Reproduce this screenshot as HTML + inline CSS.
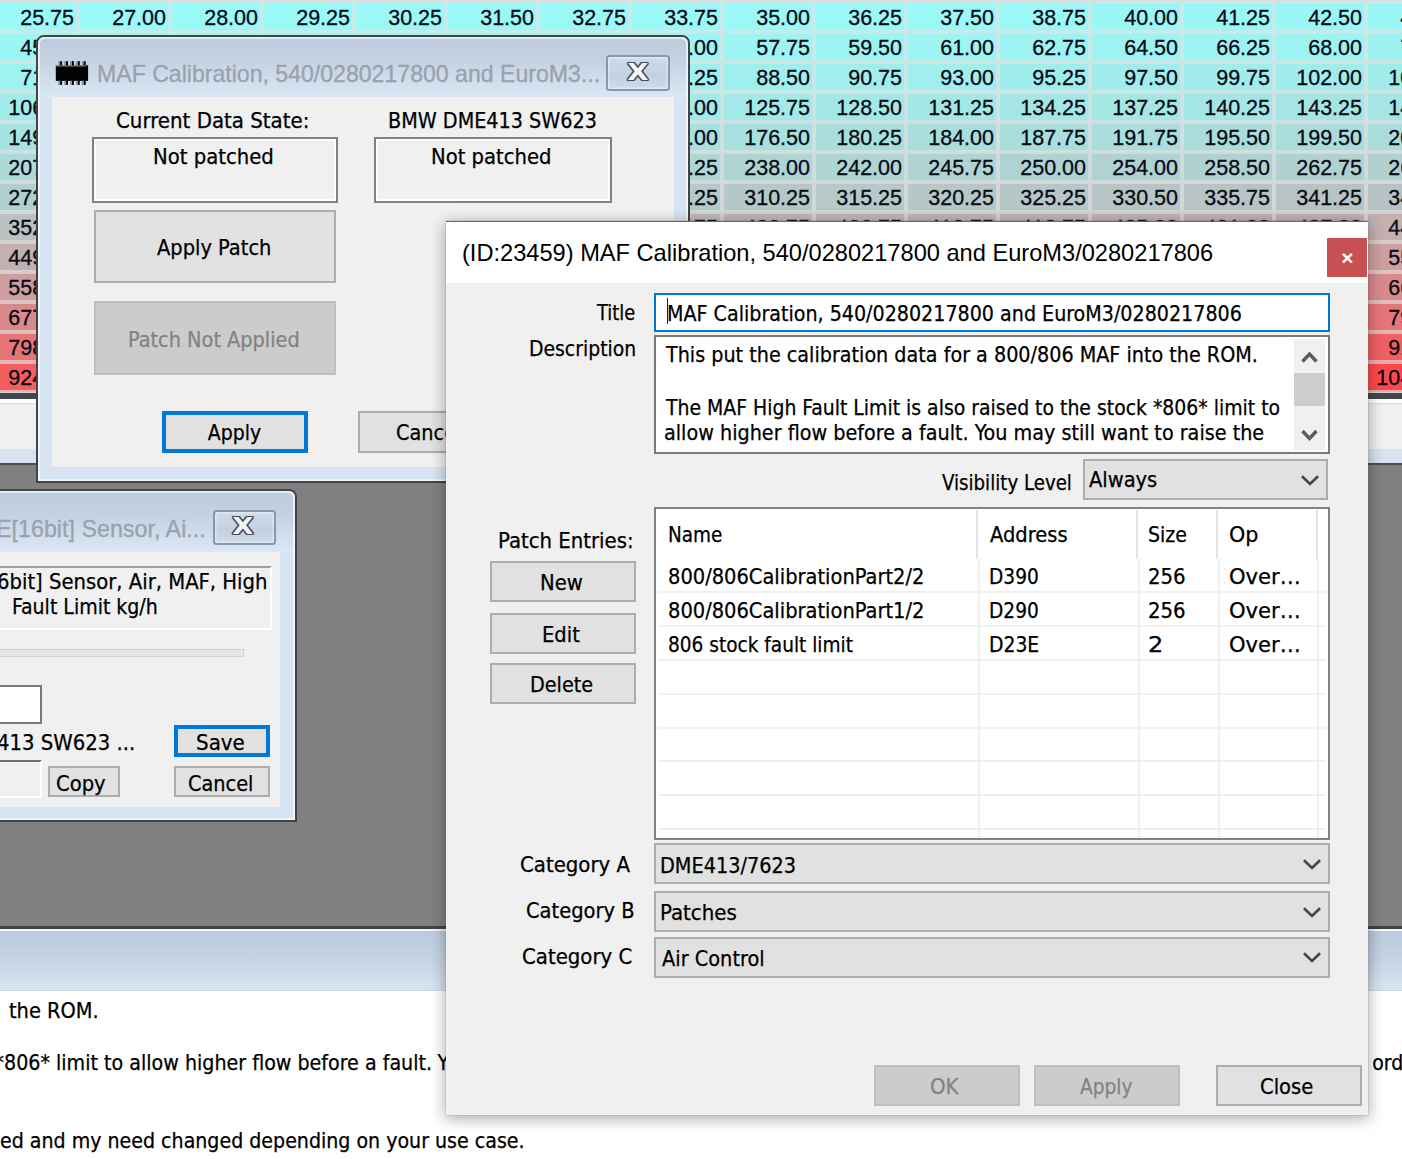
<!DOCTYPE html>
<html lang="en">
<head>
<meta charset="utf-8">
<title>(ID:23459) MAF Calibration, 540/0280217800 and EuroM3/0280217806</title>
<style>
html,body{margin:0;padding:0}
body{width:1402px;height:1159px;overflow:hidden;position:relative;background:#808080;
 font-family:"DejaVu Sans Condensed","Liberation Sans",sans-serif;font-size:21px;color:#000}
div,.gr span,span.t{position:absolute;box-sizing:border-box;display:block}
.t{white-space:pre;transform-origin:0 0;line-height:normal;-webkit-text-stroke:0.25px currentColor}
.page{left:0;top:0;width:1402px;height:1159px}
/* grid */
.grid{left:0;top:0;width:1402px;height:393px;background:#dadddd;overflow:hidden}
.gr{left:0;width:1402px;height:26.4px}
.gr span{top:0;width:88px;height:26.4px;font:normal 21.5px/26px "Liberation Sans",sans-serif;text-align:right;padding-right:2px;padding-top:.6px;color:#0a0a14;white-space:nowrap;background:var(--c);box-shadow:0 0 .8px 2.2px var(--g);-webkit-text-stroke:0.3px #0a0a14}
/* classic controls */
.btn{background:#e1e1e1;border:2px solid #adadad}
.btn.dis{background:#cccccc;border-color:#bfbfbf}
.btn.def{border:4px solid #0078d7}
.sunk{border:2px solid #828282;box-shadow:inset 2px 2px 0 #fff,inset -2px -2px 0 #fff;background:#f0f0f0}
.combo{background:#e1e1e1;border:2px solid #adadad}
.edit{background:#fff;border:2px solid #7a7a7a}
/* aero-basic inactive frame */
.frame{border:2px solid #404348;border-radius:8px 8px 0 0;overflow:hidden;background:#d7e4f2}
.frame::after{content:"";position:absolute;left:0;top:0;right:0;bottom:0;box-shadow:inset 0 0 0 1.8px rgba(255,255,255,.72);border-radius:7px 7px 0 0;pointer-events:none}
.cap{left:0;top:0;width:100%;height:62px;background:linear-gradient(#bccbdd,#c4d2e3 40%,#dbe7f5)}
.xbtn{border:2px solid #8797ae;border-radius:3.5px;background:linear-gradient(#cfdae8,#c6d3e3 50%,#c1cfe0 51%,#cfdbe9);box-shadow:inset 0 0 0 1.5px rgba(255,255,255,.38)}
.rx{position:absolute;left:0;top:0;width:40.6px;height:40px;text-align:center;font:bold 21px/40px "Liberation Sans",sans-serif;color:#fff}
.xg{position:absolute;left:0;width:59.7px;text-align:center;font:bold 22.5px/29px "DejaVu Sans","Liberation Sans",sans-serif;color:#f3f4f6;transform:scaleX(1.22);text-shadow:-1px -1px 0 #454b56,1px -1px 0 #454b56,-1px 1px 0 #454b56,1px 1px 0 #454b56,0 -1.2px 0 #454b56,0 1.2px 0 #454b56,-1.2px 0 0 #454b56,1.2px 0 0 #454b56}
</style>
</head>
<body>

<!-- ============ main application background ============ -->
<div class="page" id="app">
  <div class="grid">
<div class="gr" style="top:4.10px">
<span style="left:-12px;--c:#99faf8;--g:#c8ebea">25.75</span>
<span style="left:80px;--c:#99faf8;--g:#c8ebea">27.00</span>
<span style="left:172px;--c:#99f9f7;--g:#c8ebea">28.00</span>
<span style="left:264px;--c:#99f9f7;--g:#c8ebea">29.25</span>
<span style="left:356px;--c:#9af9f7;--g:#c8ebea">30.25</span>
<span style="left:448px;--c:#9af9f7;--g:#c8ebea">31.50</span>
<span style="left:540px;--c:#9af9f7;--g:#c8ebea">32.75</span>
<span style="left:632px;--c:#9af8f7;--g:#c8ebea">33.75</span>
<span style="left:724px;--c:#9af8f6;--g:#c8eaea">35.00</span>
<span style="left:816px;--c:#9af8f6;--g:#c8eaea">36.25</span>
<span style="left:908px;--c:#9af8f6;--g:#c8eaea">37.50</span>
<span style="left:1000px;--c:#9af8f6;--g:#c8eae9">38.75</span>
<span style="left:1092px;--c:#9af7f5;--g:#c8eae9">40.00</span>
<span style="left:1184px;--c:#9bf7f5;--g:#c8eae9">41.25</span>
<span style="left:1276px;--c:#9bf7f5;--g:#c8eae9">42.50</span>
<span style="left:1368px;--c:#9bf7f5;--g:#c8eae9">43.75</span>
</div>
<div class="gr" style="top:34.10px">
<span style="left:-12px;--c:#9bf7f5;--g:#c8eae9">45.00</span>
<span style="left:80px;--c:#9bf6f4;--g:#c8eae9">46.50</span>
<span style="left:172px;--c:#9bf6f4;--g:#c8eae9">48.25</span>
<span style="left:264px;--c:#9bf6f4;--g:#c8e9e9">49.75</span>
<span style="left:356px;--c:#9cf5f4;--g:#c9e9e9">51.50</span>
<span style="left:448px;--c:#9cf5f3;--g:#c9e9e9">53.00</span>
<span style="left:540px;--c:#9cf5f3;--g:#c9e9e8">54.50</span>
<span style="left:632px;--c:#9cf5f3;--g:#c9e9e8">56.00</span>
<span style="left:724px;--c:#9cf4f3;--g:#c9e9e8">57.75</span>
<span style="left:816px;--c:#9cf4f2;--g:#c9e9e8">59.50</span>
<span style="left:908px;--c:#9df4f2;--g:#c9e9e8">61.00</span>
<span style="left:1000px;--c:#9df3f2;--g:#c9e9e8">62.75</span>
<span style="left:1092px;--c:#9df3f1;--g:#c9e9e8">64.50</span>
<span style="left:1184px;--c:#9df3f1;--g:#c9e8e8">66.25</span>
<span style="left:1276px;--c:#9df3f1;--g:#c9e8e8">68.00</span>
<span style="left:1368px;--c:#9df2f0;--g:#c9e8e7">70.00</span>
</div>
<div class="gr" style="top:64.10px">
<span style="left:-12px;--c:#9ef2f0;--g:#c9e8e7">71.75</span>
<span style="left:80px;--c:#9ef2f0;--g:#c9e8e7">73.75</span>
<span style="left:172px;--c:#9ef1ef;--g:#c9e8e7">76.00</span>
<span style="left:264px;--c:#9ef1ef;--g:#cae8e7">78.00</span>
<span style="left:356px;--c:#9ef0ef;--g:#cae7e7">80.00</span>
<span style="left:448px;--c:#9ff0ee;--g:#cae7e7">82.25</span>
<span style="left:540px;--c:#9ff0ee;--g:#cae7e7">84.25</span>
<span style="left:632px;--c:#9fefee;--g:#cae7e6">86.25</span>
<span style="left:724px;--c:#9fefed;--g:#cae7e6">88.50</span>
<span style="left:816px;--c:#a0efed;--g:#cae7e6">90.75</span>
<span style="left:908px;--c:#a0eeed;--g:#cae7e6">93.00</span>
<span style="left:1000px;--c:#a0eeec;--g:#cae6e6">95.25</span>
<span style="left:1092px;--c:#a0edec;--g:#cae6e6">97.50</span>
<span style="left:1184px;--c:#a0edeb;--g:#cae6e6">99.75</span>
<span style="left:1276px;--c:#a1edeb;--g:#cae6e5">102.00</span>
<span style="left:1368px;--c:#a1eceb;--g:#cae6e5">104.25</span>
</div>
<div class="gr" style="top:94.10px">
<span style="left:-12px;--c:#a1ecea;--g:#cbe6e5">106.50</span>
<span style="left:80px;--c:#a1ebea;--g:#cbe6e5">109.00</span>
<span style="left:172px;--c:#a2ebea;--g:#cbe5e5">111.25</span>
<span style="left:264px;--c:#a2ebe9;--g:#cbe5e5">113.75</span>
<span style="left:356px;--c:#a2eae9;--g:#cbe5e5">116.00</span>
<span style="left:448px;--c:#a2eae8;--g:#cbe5e4">118.50</span>
<span style="left:540px;--c:#a3e9e8;--g:#cbe5e4">121.00</span>
<span style="left:632px;--c:#a3e9e8;--g:#cbe5e4">123.00</span>
<span style="left:724px;--c:#a3e9e7;--g:#cbe4e4">125.75</span>
<span style="left:816px;--c:#a3e8e7;--g:#cbe4e4">128.50</span>
<span style="left:908px;--c:#a4e8e6;--g:#cce4e4">131.25</span>
<span style="left:1000px;--c:#a4e7e6;--g:#cce4e3">134.25</span>
<span style="left:1092px;--c:#a4e7e5;--g:#cce4e3">137.25</span>
<span style="left:1184px;--c:#a4e6e5;--g:#cce4e3">140.25</span>
<span style="left:1276px;--c:#a5e5e4;--g:#cce3e3">143.25</span>
<span style="left:1368px;--c:#a5e5e4;--g:#cce3e3">146.25</span>
</div>
<div class="gr" style="top:124.10px">
<span style="left:-12px;--c:#a5e4e3;--g:#cce3e2">149.25</span>
<span style="left:80px;--c:#a6e4e3;--g:#cce3e2">152.75</span>
<span style="left:172px;--c:#a6e3e2;--g:#cce2e2">156.00</span>
<span style="left:264px;--c:#a6e3e1;--g:#cde2e2">159.50</span>
<span style="left:356px;--c:#a7e2e1;--g:#cde2e2">163.00</span>
<span style="left:448px;--c:#a7e1e0;--g:#cde2e1">166.25</span>
<span style="left:540px;--c:#a7e1e0;--g:#cde2e1">169.75</span>
<span style="left:632px;--c:#a8e0df;--g:#cde1e1">173.00</span>
<span style="left:724px;--c:#a8e0df;--g:#cde1e1">176.50</span>
<span style="left:816px;--c:#a8dfde;--g:#cde1e0">180.25</span>
<span style="left:908px;--c:#a9dedd;--g:#cee1e0">184.00</span>
<span style="left:1000px;--c:#a9dedd;--g:#cee0e0">187.75</span>
<span style="left:1092px;--c:#aadddc;--g:#cee0e0">191.75</span>
<span style="left:1184px;--c:#aadcdb;--g:#cee0df">195.50</span>
<span style="left:1276px;--c:#aadcdb;--g:#cee0df">199.50</span>
<span style="left:1368px;--c:#abdbda;--g:#cedfdf">203.25</span>
</div>
<div class="gr" style="top:154.10px">
<span style="left:-12px;--c:#abdad9;--g:#cedfdf">207.25</span>
<span style="left:80px;--c:#acdad9;--g:#cfdfde">211.00</span>
<span style="left:172px;--c:#acd9d8;--g:#cfdfde">215.00</span>
<span style="left:264px;--c:#acd8d7;--g:#cfdede">218.75</span>
<span style="left:356px;--c:#add8d7;--g:#cfdede">222.50</span>
<span style="left:448px;--c:#add7d6;--g:#cfdede">226.50</span>
<span style="left:540px;--c:#add6d6;--g:#cfdedd">230.25</span>
<span style="left:632px;--c:#aed6d5;--g:#cfdddd">234.25</span>
<span style="left:724px;--c:#aed5d4;--g:#d0dddd">238.00</span>
<span style="left:816px;--c:#afd4d4;--g:#d0dddd">242.00</span>
<span style="left:908px;--c:#afd4d3;--g:#d0dddc">245.75</span>
<span style="left:1000px;--c:#afd3d2;--g:#d0dcdc">250.00</span>
<span style="left:1092px;--c:#b0d2d2;--g:#d0dcdc">254.00</span>
<span style="left:1184px;--c:#b0d1d1;--g:#d0dcdb">258.50</span>
<span style="left:1276px;--c:#b1d1d0;--g:#d0dbdb">262.75</span>
<span style="left:1368px;--c:#b1d0cf;--g:#d1dbdb">267.25</span>
</div>
<div class="gr" style="top:184.10px">
<span style="left:-12px;--c:#b2cfcf;--g:#d1dbdb">272.00</span>
<span style="left:80px;--c:#b2cece;--g:#d1dbda">276.75</span>
<span style="left:172px;--c:#b3cdcd;--g:#d1dada">281.50</span>
<span style="left:264px;--c:#b3cdcc;--g:#d1dada">286.25</span>
<span style="left:356px;--c:#b3cccb;--g:#d2dad9">291.00</span>
<span style="left:448px;--c:#b4cbcb;--g:#d2d9d9">296.00</span>
<span style="left:540px;--c:#b4caca;--g:#d2d9d9">300.75</span>
<span style="left:632px;--c:#b5c9c9;--g:#d2d9d8">305.25</span>
<span style="left:724px;--c:#b5c8c8;--g:#d2d8d8">310.25</span>
<span style="left:816px;--c:#b6c8c7;--g:#d2d8d8">315.25</span>
<span style="left:908px;--c:#b6c7c6;--g:#d3d8d8">320.25</span>
<span style="left:1000px;--c:#b7c6c6;--g:#d3d7d7">325.25</span>
<span style="left:1092px;--c:#b7c5c5;--g:#d3d7d7">330.50</span>
<span style="left:1184px;--c:#b8c4c4;--g:#d3d7d7">335.75</span>
<span style="left:1276px;--c:#b8c3c3;--g:#d3d6d6">341.25</span>
<span style="left:1368px;--c:#b9c2c2;--g:#d4d6d6">346.75</span>
</div>
<div class="gr" style="top:214.10px">
<span style="left:-12px;--c:#bac1c1;--g:#d4d6d5">352.50</span>
<span style="left:80px;--c:#bac0c0;--g:#d4d5d5">358.50</span>
<span style="left:172px;--c:#bbbfbf;--g:#d4d5d5">364.50</span>
<span style="left:264px;--c:#bbbebe;--g:#d5d4d4">370.50</span>
<span style="left:356px;--c:#bcbdbd;--g:#d5d4d4">376.75</span>
<span style="left:448px;--c:#bdbcbc;--g:#d5d4d4">382.75</span>
<span style="left:540px;--c:#bdbbbb;--g:#d5d3d3">388.75</span>
<span style="left:632px;--c:#bebaba;--g:#d5d3d3">394.75</span>
<span style="left:724px;--c:#beb9b9;--g:#d6d2d2">400.75</span>
<span style="left:816px;--c:#bfb8b8;--g:#d6d2d2">406.75</span>
<span style="left:908px;--c:#c0b7b7;--g:#d6d2d2">412.75</span>
<span style="left:1000px;--c:#c0b6b6;--g:#d6d1d1">418.75</span>
<span style="left:1092px;--c:#c1b5b5;--g:#d7d1d1">425.00</span>
<span style="left:1184px;--c:#c1b3b4;--g:#d7d0d0">431.00</span>
<span style="left:1276px;--c:#c2b2b3;--g:#d7d0d0">437.00</span>
<span style="left:1368px;--c:#c3b1b2;--g:#d7d0d0">443.00</span>
</div>
<div class="gr" style="top:244.10px">
<span style="left:-12px;--c:#c3b0b1;--g:#d8cfcf">449.25</span>
<span style="left:80px;--c:#c4afb0;--g:#d8cfcf">456.00</span>
<span style="left:172px;--c:#c5aeaf;--g:#d8cece">462.75</span>
<span style="left:264px;--c:#c5adad;--g:#d8cece">469.50</span>
<span style="left:356px;--c:#c6acac;--g:#d9cdce">476.50</span>
<span style="left:448px;--c:#c7aaab;--g:#d9cdcd">483.25</span>
<span style="left:540px;--c:#c7a9aa;--g:#d9cccd">490.00</span>
<span style="left:632px;--c:#c8a8a9;--g:#d9cccc">496.75</span>
<span style="left:724px;--c:#c9a7a8;--g:#dacccc">503.50</span>
<span style="left:816px;--c:#c9a6a7;--g:#dacbcb">510.25</span>
<span style="left:908px;--c:#caa5a5;--g:#dacbcb">517.00</span>
<span style="left:1000px;--c:#cba3a4;--g:#dacacb">523.75</span>
<span style="left:1092px;--c:#cba2a3;--g:#dbcaca">530.75</span>
<span style="left:1184px;--c:#cca1a2;--g:#dbc9ca">537.50</span>
<span style="left:1276px;--c:#cda0a1;--g:#dbc9c9">544.25</span>
<span style="left:1368px;--c:#cd9fa0;--g:#dbc8c9">551.00</span>
</div>
<div class="gr" style="top:274.10px">
<span style="left:-12px;--c:#ce9d9f;--g:#dcc8c8">558.00</span>
<span style="left:80px;--c:#cf9c9d;--g:#dcc7c8">565.50</span>
<span style="left:172px;--c:#d09b9c;--g:#dcc7c7">573.00</span>
<span style="left:264px;--c:#d09a9b;--g:#dcc6c7">580.25</span>
<span style="left:356px;--c:#d1989a;--g:#ddc6c6">587.75</span>
<span style="left:448px;--c:#d29798;--g:#ddc5c6">595.25</span>
<span style="left:540px;--c:#d29697;--g:#ddc5c6">602.75</span>
<span style="left:632px;--c:#d39496;--g:#dec4c5">610.25</span>
<span style="left:724px;--c:#d49395;--g:#dec4c5">617.50</span>
<span style="left:816px;--c:#d59293;--g:#dec4c4">625.00</span>
<span style="left:908px;--c:#d59192;--g:#dec3c4">632.50</span>
<span style="left:1000px;--c:#d68f91;--g:#dfc3c3">640.00</span>
<span style="left:1092px;--c:#d78e90;--g:#dfc2c3">647.50</span>
<span style="left:1184px;--c:#d88d8e;--g:#dfc2c2">654.75</span>
<span style="left:1276px;--c:#d88b8d;--g:#e0c1c2">662.25</span>
<span style="left:1368px;--c:#d98a8c;--g:#e0c1c1">669.75</span>
</div>
<div class="gr" style="top:304.10px">
<span style="left:-12px;--c:#da898b;--g:#e0c0c1">677.25</span>
<span style="left:80px;--c:#db8789;--g:#e0c0c0">684.75</span>
<span style="left:172px;--c:#db8688;--g:#e1bfc0">692.25</span>
<span style="left:264px;--c:#dc8587;--g:#e1bfbf">699.75</span>
<span style="left:356px;--c:#dd8385;--g:#e1bebf">707.50</span>
<span style="left:448px;--c:#de8284;--g:#e2bebe">715.00</span>
<span style="left:540px;--c:#de8183;--g:#e2bdbe">722.50</span>
<span style="left:632px;--c:#df8082;--g:#e2bdbd">730.00</span>
<span style="left:724px;--c:#e07e80;--g:#e2bcbd">737.50</span>
<span style="left:816px;--c:#e17d7f;--g:#e3bcbc">745.00</span>
<span style="left:908px;--c:#e17c7e;--g:#e3bbbc">752.50</span>
<span style="left:1000px;--c:#e27a7d;--g:#e3bbbb">760.00</span>
<span style="left:1092px;--c:#e3797b;--g:#e4babb">767.75</span>
<span style="left:1184px;--c:#e4787a;--g:#e4babb">775.25</span>
<span style="left:1276px;--c:#e47679;--g:#e4b9ba">782.75</span>
<span style="left:1368px;--c:#e57578;--g:#e4b9ba">790.25</span>
</div>
<div class="gr" style="top:334.10px">
<span style="left:-12px;--c:#e67476;--g:#e5b8b9">798.50</span>
<span style="left:80px;--c:#e77275;--g:#e5b8b9">806.25</span>
<span style="left:172px;--c:#e87174;--g:#e5b7b8">814.25</span>
<span style="left:264px;--c:#e87072;--g:#e6b7b8">822.00</span>
<span style="left:356px;--c:#e96e71;--g:#e6b6b7">829.75</span>
<span style="left:448px;--c:#ea6d70;--g:#e6b5b7">837.75</span>
<span style="left:540px;--c:#eb6c6e;--g:#e7b5b6">845.50</span>
<span style="left:632px;--c:#eb6a6d;--g:#e7b4b6">853.25</span>
<span style="left:724px;--c:#ec696c;--g:#e7b4b5">861.25</span>
<span style="left:816px;--c:#ed676a;--g:#e7b3b5">869.00</span>
<span style="left:908px;--c:#ee6669;--g:#e8b3b4">876.75</span>
<span style="left:1000px;--c:#ef6568;--g:#e8b2b4">884.75</span>
<span style="left:1092px;--c:#ef6366;--g:#e8b2b3">892.50</span>
<span style="left:1184px;--c:#f06265;--g:#e9b1b3">900.25</span>
<span style="left:1276px;--c:#f16164;--g:#e9b1b2">908.25</span>
<span style="left:1368px;--c:#f25f62;--g:#e9b0b2">916.00</span>
</div>
<div class="gr" style="top:364.10px">
<span style="left:-12px;--c:#f35e61;--g:#eab0b1">924.75</span>
<span style="left:80px;--c:#f35c60;--g:#eaafb0">933.00</span>
<span style="left:172px;--c:#f45b5e;--g:#eaafb0">941.00</span>
<span style="left:264px;--c:#f5595d;--g:#eaaeaf">949.25</span>
<span style="left:356px;--c:#f6585c;--g:#ebaeaf">957.50</span>
<span style="left:448px;--c:#f7575a;--g:#ebadae">965.75</span>
<span style="left:540px;--c:#f75559;--g:#ebadae">973.75</span>
<span style="left:632px;--c:#f85457;--g:#ecacad">982.00</span>
<span style="left:724px;--c:#f95256;--g:#ecabad">990.25</span>
<span style="left:816px;--c:#fa5155;--g:#ecabac">998.50</span>
<span style="left:908px;--c:#fb5053;--g:#edaaac">1006.50</span>
<span style="left:1000px;--c:#fb4e52;--g:#edaaab">1014.75</span>
<span style="left:1092px;--c:#fc4d51;--g:#eda9ab">1023.00</span>
<span style="left:1184px;--c:#fd4b4f;--g:#eea9aa">1031.25</span>
<span style="left:1276px;--c:#fe4a4e;--g:#eea8aa">1039.25</span>
<span style="left:1368px;--c:#ff484c;--g:#eea8a9">1047.50</span>
</div>
  </div>
  <div style="left:0;top:393px;width:1402px;height:6px;background:#41464a"></div>
  <div style="left:0;top:398.7px;width:1402px;height:5px;background:#ffffff"></div>
  <div style="left:0;top:403.3px;width:1402px;height:47px;background:#f0f0f0;border-top:1.6px solid #dcdcdc"></div>
  <div style="left:0;top:449px;width:1402px;height:14px;background:#d7e3f1"></div>
  <div style="left:0;top:462.6px;width:1402px;height:2px;background:#4c4c4c"></div>
  <div style="left:0;top:926.2px;width:1402px;height:2.7px;background:#3e4146"></div>
  <div style="left:0;top:928.8px;width:1402px;height:2px;background:#f1f5fa"></div>
  <div style="left:0;top:930.5px;width:1402px;height:60.3px;background:linear-gradient(#bbcadc,#c5d3e3 45%,#d8e4f2);border-bottom:1.6px solid #d2d5dc"></div>
  <div style="left:0;top:990.8px;width:1402px;height:170px;background:#ffffff"></div>
<span class="t" style='left:8.60px;top:999.00px;transform:scaleX(1.0281);'>the ROM.</span>
<span class="t" style='left:3.69px;top:1050.80px;transform:scaleX(1.0100);'>806* limit to allow higher flow before a fault.</span>
<span class="t" style='left:-6.50px;top:1050.80px;transform:scaleX(1.0556);'>*</span>
<span class="t" style='left:437.50px;top:1050.80px;'>You</span>
<span class="t" style='left:-0.01px;top:1129.00px;transform:scaleX(1.0071);'>ed and my need changed depending on your use case.</span>
<span class="t" style='left:1372.30px;top:1050.80px;'>ord</span>
</div>

<!-- ============ window 2 : scalar editor (bottom-left) ============ -->
<div class="frame" id="win2" style="left:-40px;top:488.9px;width:337px;height:333.5px">
 <div style="left:38px;top:-490.9px;width:1402px;height:1159px"><!-- page coords -->
  <div class="cap" style="left:-40px;top:490.9px;width:340px;height:60.8px"></div>
  <div class="xbtn" style="left:212.5px;top:510px;width:63px;height:34.5px">
    <span class="xg" style="top:0.2px;left:-1.2px">X</span>
  </div>
  <div id="w2client" style="left:-40px;top:551.7px;width:320.3px;height:255px;background:#f0f0f0"></div>
  <div style="left:-40px;top:565.6px;width:312px;height:64.4px;background:#f0f0f0;border-top:2px solid #a0a0a0;border-right:2px solid #fff;border-bottom:2px solid #fff"></div>
  <div style="left:-40px;top:649px;width:284px;height:7.5px;background:#e6e6e6;border:1.5px solid #d2d2d2"></div>
  <div class="edit" style="left:-40px;top:685.4px;width:81.7px;height:39px"></div>
  <div style="left:-40px;top:759.6px;width:81.7px;height:38px;background:#f0f0f0;border-top:2px solid #6e6e6e;border-right:2px solid #fff;border-bottom:2px solid #fff"></div>
  <div class="btn def" style="left:174.4px;top:725.4px;width:95.6px;height:31.2px"></div>
  <div class="btn" style="left:48.1px;top:765.6px;width:71.7px;height:31px"></div>
  <div class="btn" style="left:174.4px;top:765.6px;width:95.6px;height:31px"></div>
<span class="t" style='left:-3.97px;top:515.40px;font-size:24px;color:#9aa1ab;font-family:"Liberation Sans",sans-serif;-webkit-text-stroke:0.3px;transform:scaleX(0.9703);'>E[16bit] Sensor, Ai...</span>
<span class="t" style='left:-3.04px;top:569.70px;transform:scaleX(1.0392);'>6bit] Sensor, Air, MAF, High</span>
<span class="t" style='left:11.80px;top:595.40px;transform:scaleX(1.0036);'>Fault Limit kg/h</span>
<span class="t" style='left:-3.00px;top:731.20px;transform:scaleX(1.0407);'>413 SW623 ...</span>
<span class="t" style='left:196.25px;top:731.20px;transform:scaleX(1.0525);'>Save</span>
<span class="t" style='left:56.36px;top:771.90px;transform:scaleX(1.0374);'>Copy</span>
<span class="t" style='left:188.38px;top:771.90px;transform:scaleX(1.0216);'>Cancel</span>
 </div>
</div>

<!-- ============ window 1 : patch dialog ============ -->
<div class="frame" id="win1" style="left:36px;top:35px;width:654.4px;height:448px">
 <div style="left:-38px;top:-37px;width:1402px;height:1159px"><!-- page coords -->
  <div class="cap" style="left:36px;top:37px;width:656px;height:60px"></div>
  <svg style="position:absolute;left:55px;top:61px" width="34" height="25" viewBox="0 0 34 25"><rect x="0.8" y="4.3" width="32.3" height="15.6" fill="#020202"/><rect x="0.8" y="4.3" width="30.4" height="1.2" fill="#8e8e8e"/><rect x="3.3" y="0.2" width="1.9" height="4.2" fill="#8e8e8e"/><rect x="5.2" y="0.2" width="1.9" height="4.2" fill="#000"/><rect x="3.3" y="19.8" width="1.9" height="4.1" fill="#8e8e8e"/><rect x="5.2" y="19.8" width="1.9" height="4.1" fill="#000"/><rect x="9.2" y="0.2" width="1.9" height="4.2" fill="#8e8e8e"/><rect x="11.1" y="0.2" width="1.9" height="4.2" fill="#000"/><rect x="9.2" y="19.8" width="1.9" height="4.1" fill="#8e8e8e"/><rect x="11.1" y="19.8" width="1.9" height="4.1" fill="#000"/><rect x="15.1" y="0.2" width="1.9" height="4.2" fill="#8e8e8e"/><rect x="17.0" y="0.2" width="1.9" height="4.2" fill="#000"/><rect x="15.1" y="19.8" width="1.9" height="4.1" fill="#8e8e8e"/><rect x="17.0" y="19.8" width="1.9" height="4.1" fill="#000"/><rect x="21.0" y="0.2" width="1.9" height="4.2" fill="#8e8e8e"/><rect x="22.9" y="0.2" width="1.9" height="4.2" fill="#000"/><rect x="21.0" y="19.8" width="1.9" height="4.1" fill="#8e8e8e"/><rect x="22.9" y="19.8" width="1.9" height="4.1" fill="#000"/><rect x="26.9" y="0.2" width="1.9" height="4.2" fill="#8e8e8e"/><rect x="28.8" y="0.2" width="1.9" height="4.2" fill="#000"/><rect x="26.9" y="19.8" width="1.9" height="4.1" fill="#8e8e8e"/><rect x="28.8" y="19.8" width="1.9" height="4.1" fill="#000"/></svg>
  <div class="xbtn" style="left:606.2px;top:55px;width:63.7px;height:35.8px">
    <span class="xg" style="top:0.8px">X</span>
  </div>
  <div id="w1client" style="left:52px;top:97px;width:622px;height:370px;background:#f0f0f0"></div>
  <div class="sunk" style="left:92.1px;top:137.4px;width:246.1px;height:65.3px"></div>
  <div class="sunk" style="left:374.2px;top:137.4px;width:238px;height:65.3px"></div>
  <div class="btn" style="left:94.2px;top:209.6px;width:241.8px;height:73.4px"></div>
  <div class="btn dis" style="left:94.2px;top:301.2px;width:241.8px;height:73.4px"></div>
  <div class="btn def" style="left:162.2px;top:411px;width:145.8px;height:41.8px"></div>
  <div class="btn" style="left:358px;top:411px;width:145.8px;height:41.8px"></div>
<span class="t" style='left:96.54px;top:60.00px;font-size:24px;color:#9aa1ab;font-family:"Liberation Sans",sans-serif;-webkit-text-stroke:0.3px;transform:scaleX(0.9619);'>MAF Calibration, 540/0280217800 and EuroM3...</span>
<span class="t" style='left:116.25px;top:109.20px;transform:scaleX(1.0490);'>Current Data State:</span>
<span class="t" style='left:387.78px;top:109.20px;transform:scaleX(1.0167);'>BMW DME413 SW623</span>
<span class="t" style='left:153.16px;top:145.20px;transform:scaleX(1.0407);'>Not patched</span>
<span class="t" style='left:431.36px;top:145.20px;transform:scaleX(1.0381);'>Not patched</span>
<span class="t" style='left:157.40px;top:235.50px;transform:scaleX(1.0295);'>Apply Patch</span>
<span class="t" style='left:127.88px;top:327.50px;color:#838383;transform:scaleX(1.0228);'>Patch Not Applied</span>
<span class="t" style='left:207.80px;top:421.00px;'>Apply</span>
<span class="t" style='left:396.18px;top:421.00px;transform:scaleX(1.0216);'>Cancel</span>
 </div>
</div>

<!-- ============ main dialog : patch editor ============ -->
<div id="dlg" style="left:446px;top:220.7px;width:922.4px;height:894.3px;background:#f0f0f0;box-shadow:0 0 0 1px rgba(90,90,90,.12),0 3px 14px 1px rgba(0,0,0,.32);border-top:1.3px solid #686868;overflow:hidden">
 <div style="left:-446px;top:-222px;width:1402px;height:1159px"><!-- page coords -->
  <div style="left:446px;top:221.5px;width:923px;height:61.5px;background:#fff"></div>
  <div style="left:1327.1px;top:238.1px;width:39.9px;height:39.5px;background:#c75050">
    <span class="rx">×</span>
  </div>

  <div style="left:654px;top:293.1px;width:676px;height:39.6px;background:#fff;border:2px solid #0078d7"></div>
  <div style="left:666.8px;top:298.5px;width:1.6px;height:26px;background:#222"></div>

  <div class="edit" style="left:654.4px;top:335.3px;width:675.6px;height:118.9px"></div>
  <div style="left:1294.2px;top:339.3px;width:31px;height:111px;background:#f0f0f0"></div>
  <div style="left:1294.2px;top:373.4px;width:31px;height:33.1px;background:#cdcdcd"></div>
  <svg style="position:absolute;left:1294px;top:339px" width="31" height="111" viewBox="0 0 31 111"><path d="M8.5 22.5 L15.5 15 L22.5 22.5 M8.5 92 L15.5 99.5 L22.5 92" stroke="#5c5c5c" stroke-width="3.4" fill="none"/></svg>

  <div class="combo" style="left:1083px;top:459.3px;width:244.8px;height:41.2px"></div>
  <svg style="position:absolute;left:1299.6px;top:474.7px" width="20" height="12" viewBox="0 0 20 12"><path d="M2 2.2 L10 10 L18 2.2" stroke="#454545" stroke-width="2.6" fill="none"/></svg>

  <div class="btn" style="left:490.3px;top:561.5px;width:145.5px;height:40.7px"></div>
  <div class="btn" style="left:490.3px;top:613.8px;width:145.5px;height:40.7px"></div>
  <div class="btn" style="left:490.3px;top:663.4px;width:145.5px;height:41px"></div>

  <div id="list" style="left:654.4px;top:507.2px;width:675.6px;height:333.2px;background:#fff;border:2px solid #828282"></div>
  <!-- header separators -->
  <div style="left:976px;top:510px;width:2px;height:49px;background:#e5e5e5"></div>
  <div style="left:1136.3px;top:510px;width:2px;height:49px;background:#e5e5e5"></div>
  <div style="left:1216.1px;top:510px;width:2px;height:49px;background:#e5e5e5"></div>
  <div style="left:1315.6px;top:510px;width:2px;height:49px;background:#e5e5e5"></div>
  <!-- row grid -->
  <div style="left:978px;top:559px;width:2px;height:279px;background:#f0f0f0"></div>
  <div style="left:1138px;top:559px;width:2px;height:279px;background:#f0f0f0"></div>
  <div style="left:1217.6px;top:559px;width:2px;height:279px;background:#f0f0f0"></div>
  <div style="left:1317px;top:559px;width:2px;height:279px;background:#f0f0f0"></div>
  <div style="left:658px;top:591.4px;width:668px;height:2px;background:#f0f0f0"></div>
  <div style="left:658px;top:625.3px;width:668px;height:2px;background:#f0f0f0"></div>
  <div style="left:658px;top:659.1px;width:668px;height:2px;background:#f0f0f0"></div>
  <div style="left:658px;top:693px;width:668px;height:2px;background:#f0f0f0"></div>
  <div style="left:658px;top:726.9px;width:668px;height:2px;background:#f0f0f0"></div>
  <div style="left:658px;top:760.7px;width:668px;height:2px;background:#f0f0f0"></div>
  <div style="left:658px;top:794.6px;width:668px;height:2px;background:#f0f0f0"></div>
  <div style="left:658px;top:828.5px;width:668px;height:2px;background:#f0f0f0"></div>

  <div class="combo" style="left:654.4px;top:843.3px;width:675.2px;height:41.3px"></div>
  <div class="combo" style="left:654.4px;top:891.4px;width:675.2px;height:41.1px"></div>
  <div class="combo" style="left:654.4px;top:937px;width:675.2px;height:41.7px"></div>
  <svg style="position:absolute;left:1301.7px;top:858.8px" width="20" height="12" viewBox="0 0 20 12"><path d="M2 2.2 L10 10 L18 2.2" stroke="#454545" stroke-width="2.6" fill="none"/></svg>
  <svg style="position:absolute;left:1301.7px;top:906.4px" width="20" height="12" viewBox="0 0 20 12"><path d="M2 2.2 L10 10 L18 2.2" stroke="#454545" stroke-width="2.6" fill="none"/></svg>
  <svg style="position:absolute;left:1301.7px;top:951.8px" width="20" height="12" viewBox="0 0 20 12"><path d="M2 2.2 L10 10 L18 2.2" stroke="#454545" stroke-width="2.6" fill="none"/></svg>

  <div class="btn dis" style="left:873.9px;top:1065.3px;width:146.1px;height:41.5px"></div>
  <div class="btn dis" style="left:1034.3px;top:1065.3px;width:145.7px;height:41.5px"></div>
  <div class="btn" style="left:1216px;top:1065.3px;width:146px;height:41.5px"></div>
<span class="t" style='left:461.52px;top:239.50px;font-size:24px;font-family:"Liberation Sans",sans-serif;-webkit-text-stroke:0;transform:scaleX(0.9841);'>(ID:23459) MAF Calibration, 540/0280217800 and EuroM3/0280217806</span>
<span class="t" style='left:597.14px;top:301.40px;transform:scaleX(0.9438);'>Title</span>
<span class="t" style='left:666.89px;top:302.40px;transform:scaleX(1.0109);'>MAF Calibration, 540/0280217800 and EuroM3/0280217806</span>
<span class="t" style='left:528.50px;top:337.70px;transform:scaleX(0.9959);'>Description</span>
<span class="t" style='left:666.12px;top:343.70px;transform:scaleX(1.0151);'>This put the calibration data for a 800/806 MAF into the ROM.</span>
<span class="t" style='left:666.10px;top:395.90px;transform:scaleX(0.9976);'>The MAF High Fault Limit is also raised to the stock *806* limit to</span>
<span class="t" style='left:664.08px;top:421.80px;transform:scaleX(1.0161);'>allow higher flow before a fault. You may still want to raise the</span>
<span class="t" style='left:941.70px;top:471.00px;transform:scaleX(0.9625);'>Visibility Level</span>
<span class="t" style='left:1089.20px;top:468.00px;transform:scaleX(1.0310);'>Always</span>
<span class="t" style='left:498.26px;top:529.50px;transform:scaleX(1.0432);'>Patch Entries:</span>
<span class="t" style='left:539.96px;top:571.40px;transform:scaleX(1.0388);'>New</span>
<span class="t" style='left:542.07px;top:623.20px;transform:scaleX(1.0346);'>Edit</span>
<span class="t" style='left:529.88px;top:673.50px;transform:scaleX(1.0156);'>Delete</span>
<span class="t" style='left:668.42px;top:523.70px;transform:scaleX(0.9757);'>Name</span>
<span class="t" style='left:989.90px;top:523.70px;transform:scaleX(1.0334);'>Address</span>
<span class="t" style='left:1148.00px;top:523.70px;transform:scaleX(1.0037);'>Size</span>
<span class="t" style='left:1228.71px;top:523.70px;transform:scaleX(1.0938);'>Op</span>
<span class="t" style='left:668.37px;top:565.40px;transform:scaleX(1.0302);'>800/806CalibrationPart2/2</span>
<span class="t" style='left:668.37px;top:599.20px;transform:scaleX(1.0302);'>800/806CalibrationPart1/2</span>
<span class="t" style='left:668.42px;top:633.00px;transform:scaleX(0.9808);'>806 stock fault limit</span>
<span class="t" style='left:988.92px;top:565.40px;transform:scaleX(0.9838);'>D390</span>
<span class="t" style='left:988.92px;top:599.20px;transform:scaleX(0.9838);'>D290</span>
<span class="t" style='left:988.91px;top:633.00px;transform:scaleX(0.9941);'>D23E</span>
<span class="t" style='left:1147.96px;top:565.40px;transform:scaleX(1.0430);'>256</span>
<span class="t" style='left:1147.96px;top:599.20px;transform:scaleX(1.0430);'>256</span>
<span class="t" style='left:1147.73px;top:633.00px;transform:scaleX(1.2700);'>2</span>
<span class="t" style='left:1228.68px;top:565.40px;transform:scaleX(1.1166);'>Over…</span>
<span class="t" style='left:1228.68px;top:599.20px;transform:scaleX(1.1166);'>Over…</span>
<span class="t" style='left:1228.68px;top:633.00px;transform:scaleX(1.1166);'>Over…</span>
<span class="t" style='left:520.25px;top:853.30px;transform:scaleX(1.0461);'>Category A</span>
<span class="t" style='left:660.48px;top:854.50px;transform:scaleX(1.0201);'>DME413/7623</span>
<span class="t" style='left:526.47px;top:899.50px;transform:scaleX(1.0320);'>Category B</span>
<span class="t" style='left:660.45px;top:901.70px;transform:scaleX(1.0487);'>Patches</span>
<span class="t" style='left:522.35px;top:945.50px;transform:scaleX(1.0451);'>Category C</span>
<span class="t" style='left:661.50px;top:947.70px;transform:scaleX(1.0251);'>Air Control</span>
<span class="t" style='left:930.25px;top:1075.60px;color:#838383;transform:scaleX(1.0496);'>OK</span>
<span class="t" style='left:1080.00px;top:1075.60px;color:#838383;transform:scaleX(0.9819);'>Apply</span>
<span class="t" style='left:1259.86px;top:1075.60px;transform:scaleX(1.0352);'>Close</span>
 </div>
</div>

</body>
</html>
